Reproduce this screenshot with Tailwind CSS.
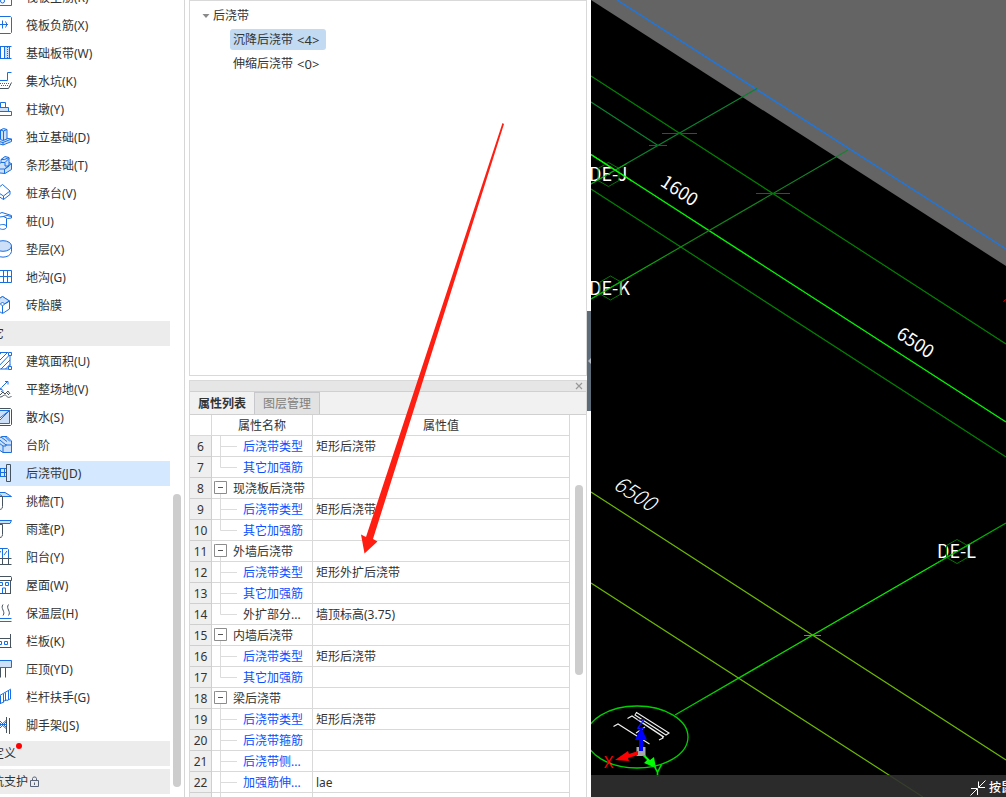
<!DOCTYPE html>
<html lang="zh-CN">
<head>
    <meta charset="UTF-8">
    <meta name="viewport" content="width=device-width, initial-scale=1.0">
    <title>后浇带</title>
    <script src="https://cdn.jsdelivr.net/npm/@tailwindcss/browser@4"></script>
</head>
<body class="h-screen flex overflow-hidden bg-white text-[12px] leading-4 text-[#333] font-['Noto_Sans','Noto_Sans_CJK_SC',sans-serif]">

<!-- Component list -->
<nav class="flex shrink-0 h-full overflow-hidden border-r border-[#d6d6d6]">
    <div class="w-[170px] h-full flex flex-col justify-end overflow-hidden pb-[3px]">
        <ul id="components" class="w-[198px] -ml-7 flex flex-col gap-[3px]"></ul>
    </div>
    <div class="w-[14px] flex flex-col items-center justify-end pb-[10px]">
        <div class="w-2 h-[293px] rounded-full bg-[#cdcdcd]"></div>
    </div>
</nav>

<!-- Tree and property list -->
<main class="w-[398px] ml-1 shrink-0 h-full flex flex-col gap-1">
    <section class="h-[376px] shrink-0 border border-[#d9d9d9] pt-1 pl-3">
        <div class="h-[22px] flex items-center gap-[3px]">
            <svg class="w-2 h-2" viewBox="0 0 8 8"><path d="M.5 2h7L4 6z" fill="#8a8a8a"/></svg>
            <span>后浇带</span>
        </div>
        <ul class="pl-7 pt-0.5 flex flex-col items-start gap-[3px]">
            <li><button class="h-[21px] px-[3px] w-24 flex items-center gap-1 whitespace-nowrap rounded-[3px] bg-[#c2daf2]">沉降后浇带 <span class="text-[13px]">&lt;4&gt;</span></button></li>
            <li><button class="h-[21px] px-[3px] w-24 flex items-center gap-1 whitespace-nowrap rounded-[3px]">伸缩后浇带 <span class="text-[13px]">&lt;0&gt;</span></button></li>
        </ul>
    </section>

    <section class="flex-1 min-h-0 flex flex-col border border-b-0 border-[#d9d9d9]">
        <div class="h-[11px] shrink-0 flex items-center justify-end bg-[#e6e6e6] border-b border-[#d0d0d0] pr-[3px]">
            <button aria-label="关闭" class="block">
                <svg class="w-2 h-2" viewBox="0 0 8 8"><path d="M1 1l6 6M7 1L1 7" stroke="#999" stroke-width="1.2"/></svg>
            </button>
        </div>
        <div class="h-[23px] shrink-0 flex bg-[#f1f1f1] border-b border-[#d0d0d0]">
            <button class="w-[65px] pt-0.5 font-bold border-r border-[#c6c8cc]">属性列表</button>
            <button class="w-[65px] text-[#808080] bg-[#e2e2e2] border-r border-t border-[#c6c8cc]">图层管理</button>
        </div>
        <div class="flex-1 min-h-0 flex overflow-hidden">
            <div class="flex-1 overflow-hidden">
                <table class="w-full table-fixed border-separate border-spacing-0">
                    <thead>
                    <tr class="h-[21px]">
                        <th class="w-[22px] p-0 border-r border-b border-[#d9d9d9]"></th>
                        <th class="w-[101px] p-0 pt-0.5 font-normal border-r border-b border-[#d9d9d9]">属性名称</th>
                        <th class="p-0 pt-0.5 font-normal border-r border-b border-[#d9d9d9]">属性值</th>
                    </tr>
                    </thead>
                    <tbody id="props"></tbody>
                </table>
            </div>
            <div class="w-4 flex justify-end pr-[3px] pt-[70px]">
                <div class="w-2 h-[190px] rounded-full bg-[#cdcdcd]"></div>
            </div>
        </div>
    </section>
</main>

<div class="w-1 shrink-0 pt-[311px]">
    <button aria-label="收起" class="w-1 h-[100px] flex items-center bg-[#5d6b78]">
        <svg class="w-1 h-2" viewBox="0 0 4 8"><path d="M4 1v6L1 4z" fill="#b5bcc4"/></svg>
    </button>
</div>

<!-- Drawing viewport -->
<section class="flex-1 min-w-0 h-full relative bg-black overflow-hidden">
    <svg class="w-full h-full" viewBox="591 0 415 797" preserveAspectRatio="xMinYMin slice" fill="none">
        <defs>
            <linearGradient id="axisK" gradientUnits="userSpaceOnUse" x1="591" y1="299" x2="848" y2="150">
                <stop offset="0" stop-color="#00d400"/><stop offset=".4" stop-color="#148214"/><stop offset="1" stop-color="#148230"/>
            </linearGradient>
            <linearGradient id="axisL" gradientUnits="userSpaceOnUse" x1="675" y1="715" x2="1006" y2="523">
                <stop offset="0" stop-color="#00c800"/><stop offset=".4" stop-color="#14dc00"/><stop offset=".75" stop-color="#00f000"/><stop offset="1" stop-color="#009c00"/>
            </linearGradient>
        </defs>
        <path d="M591 0H1006V266z" fill="#646464"/>
        <path d="M617 0L1006 249" stroke="#1a78e6" stroke-width="1.4"/>

        <!-- grid axes -->
        <path d="M591 76L1006 344M591 189L1006 457" stroke="#008200" stroke-width="1.2"/>
        <path d="M591 102L658 145.500M591 184L757 88.500" stroke="#0a8230" stroke-width="1.2"/>
        <path d="M591 154.500L1006 422" stroke="#00f800" stroke-width="1.400"/>
        <path d="M591 299L848 150" stroke="url(#axisK)" stroke-width="1.2"/>
        <path d="M591 492L1006 760M591 583L923 797" stroke="#6cb800" stroke-width="1.2"/>
        <path d="M675 715L1006 523" stroke="url(#axisL)" stroke-width="1.3"/>
        <path d="M662 133.500h35M649 145.500h18M756 193.500h34" stroke="#087008"/>
        <path d="M804 635.500h17" stroke="#5aaa00"/>

        <!-- axis labels -->
        <g fill="#fff" font-family="Noto Sans CJK SC, sans-serif" font-size="18">
            <text x="589" y="181">DE-J</text>
            <text x="589" y="295">DE-K</text>
            <text x="937" y="558">DE-L</text>
            <g text-anchor="middle">
                <text transform="translate(676 196) rotate(33)">1600</text>
                <text transform="translate(912 348) rotate(33)">6500</text>
                <text transform="translate(631 500) rotate(33)" font-style="italic" font-weight="300" font-size="21">6500</text>
            </g>
        </g>
        <g stroke="#007800">
            <path d="M608.500 162.500l10.500 6v12l-10.500 6-10.500-6v-12z"/>
            <path d="M610.500 276l10.500 6v12l-10.500 6-10.500-6v-12z"/>
            <path d="M957 539.500l10.500 6v12l-10.500 6-10.500-6v-12z"/>
        </g>
        <path d="M591 184L627 163.500M591 299L630 276.500M937 563L976 540.500" stroke="#00b400"/>
        <path d="M591 154.500L632 181" stroke="#00f800" stroke-width="1.2"/>
        <path d="M1003.500 301.500l2.500-2" stroke="#e00000"/>

        <!-- orientation gizmo -->
        <ellipse cx="637" cy="737" rx="51" ry="31" stroke="#00d000" stroke-width="1.3"/>
        <path d="M636.500 712.500L669 733L666 735L635 715zM627.500 718.500L632 716L662 736L663 738L659 740M613.500 726.500L618 724L649.500 744M636 733L645 727M640 721L664 737" stroke="#f0f0f0" stroke-width="1.100"/>
        <text x="637" y="729" fill="#1414ff" font-size="14" font-family="Noto Sans, sans-serif">Z</text>
        <path d="M636.500 747h9v9h-9z" fill="#a8a8a8"/>
        <path d="M639 751v-11h-4l6-13 6 13h-4v11z" fill="#0000ff"/>
        <path d="M638 751l-9 3-1-3-13 9 14 1-1-3 10-3z" fill="#ff0000"/>
        <path d="M642 755l5 5-3 3 12 5-2-11-4 3-5-5z" fill="#00ff00"/>
        <text x="604" y="768" fill="#ff0000" font-size="16" font-family="Noto Sans, sans-serif">X</text>
        <text x="653" y="777" fill="#00e600" font-size="16" font-family="Noto Sans, sans-serif">Y</text>
    </svg>

    <footer class="absolute inset-x-0 bottom-0 h-[22px] flex bg-[#303030]/90 text-white">
        <div class="ml-auto w-9 flex items-center gap-[3px] pt-1 overflow-hidden whitespace-nowrap">
            <svg class="w-4 h-4 shrink-0" viewBox="0 0 16 16" fill="none" stroke="#fff"><path d="M15.500 .5L8.500 7.500M8.500 1.500v6H15M.5 15.500L7 9M1 8.500h6.500V15"/></svg>
            <span class="font-medium">按鼠标左键指定第一个角点</span>
        </div>
    </footer>
</section>

<!-- Pointer arrow -->
<svg class="absolute left-[355px] top-[120px] w-[152px] h-[436px] pointer-events-none" viewBox="355 120 152 436">
    <path d="M502.500 123L504 124L373 539L377.500 541.500L364.500 553.500L361 534.500L366 537z" fill="#ff1e12"/>
</svg>

<script>
    // b: blue stroke, f: light blue fill with blue stroke, d: dark stroke, t: dotted blue
    const styles = {
        b: 'fill="none" stroke="#1a6fe0"',
        f: 'fill="#cde0f8" stroke="#1a6fe0"',
        d: 'fill="none" stroke="#47525f"',
        t: 'fill="none" stroke="#1a6fe0" stroke-dasharray="1 1"'
    };

    const components = [
        ['筏板主筋(R)', [['b', 'M.5.5h17v17H.5zM6.500 13a2 2 0 1 0 4 0a2 2 0 1 0-4 0M8.500 3v8']]],
        ['筏板负筋(X)', [['b', 'M1.500.5h15l1 1v15l-1 1h-15l-1-1v-15zM3 8.500h11M8.500 4.500v8M11.500 5.500l1.500 3-1.500 3']]],
        ['基础板带(W)', [['f', 'M10.500 2.500h5v12h-5z'], ['b', 'M0 2.500h17.500M0 14.500h17.500M2.500 2.500v12M6.500 2.500v12'], ['t', 'M13.500 3v11']]],
        ['集水坑(K)', [['b', 'M17.500.5h-4v8H0'], ['t', 'M0 11.500h15M1 13.500h13'], ['d', 'M17.500 10.500l-3 6H0']]],
        ['柱墩(Y)', [['b', 'M6.500 2.500h5v5h-5z'], ['f', 'M3.500 7.500h11v4h-11z'], ['b', 'M.5 11.500h17v4H.5z']]],
        ['独立基础(D)', [['f', 'M1 12.500l7-3 9.500 1.500v2.500L9 17l-8-2.500z'], ['b', 'M1 12.500l8 2 8.500-3.500M9 14.500V17'], ['f', 'M6.500 2l3-1.500 3.500 1V11l-4 1.500-2.500-1zM9.500 3v9M9.500 3l3.500-1.500M6.500 2l3 1']]],
        ['条形基础(T)', [['f', 'M1 11.500l6-5V3.500l4-3 4 1v5l2.500 1v6L11 17.500l-10-1z'], ['b', 'M1 13h9.500v4.500M10.500 13l7-5.500M7 6.500h4V10h4M11 6.500l4-4M7 3.500h3.500L15 1.500M15 6.500V10l-4 3']]],
        ['桩承台(V)', [['b', 'M8.500.5L1 6.500l8.500 5.500L16 7zM1 6.500V10l8.500 5.500 6.500-5V7M9.500 12v3.500']]],
        ['桩(U)', [['b', 'M1 3.500l7-3 9.500 3v2.500l-4 .5-4-2-8 1zM9 4.500l4-1 4.500 1M5 6v9.500c1 2.500 6.500 2.500 7.500 0V6.500M5 14c1-2 6.500-2 7.500 0']]],
        ['垫层(X)', [['b', 'M.5 6v5.500c1 7.500 16 7.500 17 0V6'], ['f', 'M.5 6a8.500 5.300 0 1 0 17 0a8.500 5.300 0 1 0-17 0']]],
        ['地沟(G)', [['b', 'M.5 2.500h17v12H.5zM.5 8.500h17M5.500 2.500v12M9.500 2.500v12M13.500 2.500v12']]],
        ['砖胎膜', [['b', 'M8.500.5l7 4.500v8l-7 4.500-7-4.500V5z'], ['f', 'M8.500.5l7 4.500-5 3-2-2-2 2-5-3z'], ['b', 'M6.500 8l2 2 2-2M8.500 10v7M10.500 8l5-3']]],
        { head: '其它' },
        ['建筑面积(U)', [['b', 'M2 .5h12M2 17h12M16 4v10.500M.5 8l7-7.500M.5 13.500L13 1M2 17L15 3.500M7 17l9-9M11.500 17l4.500-4.500'], ['b', 'M14.500.5h3v3h-3zM14.500 14.500h3v3h-3z']]],
        ['平整场地(V)', [['b', 'M1 3.500L9.500 11M3 10l5-1M7.500 7.500L13 2M11 1.500h3v3'], ['d', 'M1 12l5 3 3-3 2 2 3-3 2 3M1 16.500c3-3 4 2 7 0s3-2 5 0 3 0 4.500 0M7 11l3 2M13 13l2 2']]],
        ['散水(S)', [['f', 'M2.500 15.500v-3L15.500 2.500h-13zM2.500 15.500L15.500 2.500v13z'], ['d', 'M.5.5h16l1 1v15l-1 1H.5z']]],
        ['台阶', [['f', 'M1 4l7-3.500h5l4.500 4.500V16.500H9L1 11z'], ['b', 'M1 4l8 6v6.500M4 2.500l8 6.500h5M7 1l6 4.500M11 .5l5 5M9 10h3V8']]],
        ['后浇带(JD)', [['b', 'M0 4.500h12M0 8.500h12M0 12.500h12M6.500 4v9M10.500 4v9'], ['d', 'M12.500.5h4v17h-4z']]],
        ['挑檐(T)', [['f', 'M0 .5h11l6.500 4H8L7 3H0z'], ['d', 'M0 4.500h8.500v10c0 3-2 3-4 3M5.500 10v7']]],
        ['雨蓬(P)', [['f', 'M0 .5h17.500l-1.500 3H0z'], ['d', 'M0 4.500h8.500v10c0 3-2 3-4 3M5.500 10v7']]],
        ['阳台(Y)', [['b', 'M2.500 10V.5h11l1 1V10M8.500 1v9M10 7l3-4M4 7l3-4'], ['d', 'M0 10.500h17.500M0 16.500h17.500M2.500 11v5M8.500 11v5M14.500 11v5']]],
        ['屋面(W)', [['d', 'M1 .5h16l.5 1v3H.5v-3zM2.500 5v12.500M16.500 5v12.500M0 17.500h17'], ['b', 'M8.500 17v-5h3v5M5.500 9.500v-3h3v3zM11.500 9.500v-3h3v3z']]],
        ['保温层(H)', [['d', 'M4 .5c-3 4 3 7 0 11M9 .5c-3 4 3 7 0 11M14.500.5c-3 4 3 7 0 11'], ['b', 'M0 14.500h17.500M0 17.500h17.500']]],
        ['栏板(K)', [['d', 'M0 6.500h16.500M16.500 2v14M0 15.500h17.500'], ['b', 'M4.500 9.500h3v3h-3zM10.500 9.500h3v3h-3z']]],
        ['压顶(YD)', [['f', 'M.5.5h17v7H.5z'], ['d', 'M6.500 8v9.500M11.500 8v9.500']]],
        ['栏杆扶手(G)', [['b', 'M4 8.500L17 1M6.500 7.500v8M9.500 6v8M11.500 4.500v8M14.500 3v9M16.500 2v9M5 16l5-2M10 13l3-1M13 12.500l4-2']]],
        ['脚手架(JS)', [['d', 'M12.500 1v16M15.500 2v16M2.500 1v16'], ['b', 'M3 4.500l9 8M3 12.500l9-8M2 8.500h11M6 5l6 6M6 12l6-6']]],
        { head: '自定义', dot: true },
        { head: '基坑支护', lock: true }
    ];

    const dot = '<span class="w-1.5 h-1.5 mt-0.5 self-start rounded-full bg-[#ff0000]"></span>';
    const lock = '<svg class="w-[11px] h-3 ml-px" viewBox="0 0 11 12" fill="none" stroke="#5a6478"><path d="M1.500 4.500h8v6h-8zM3.500 4.500v-2l1-1.500h2l1 1.500v2M5.500 6.500v2.500"/></svg>';

    document.getElementById('components').innerHTML = components.map(c => {
        if (c.head) {
            return `<li class="h-[25px] pl-2 flex items-center bg-[#ececec]">${c.head}${c.dot ? dot : ''}${c.lock ? lock : ''}</li>`;
        }
        const paths = c[1].map(([s, d]) => `<path d="${d}" ${styles[s]}/>`).join('');
        const bg = c[0].startsWith('后浇带') ? 'bg-[#d4e8ff]' : '';
        return `<li><button class="w-full h-[25px] pl-[22px] flex items-center gap-[14px] text-left ${bg}">
            <svg class="w-[18px] h-[19px] shrink-0" viewBox="0 0 18 19">${paths}</svg>${c[0]}</button></li>`;
    }).join('');

    // [no, name, value, kind] - kind: g = group, m = middle child, l = last child, x = last child in plain colour
    const props = [
        [6, '后浇带类型', '矩形后浇带', 'm'],
        [7, '其它加强筋', '', 'l'],
        [8, '现浇板后浇带', '', 'g'],
        [9, '后浇带类型', '矩形后浇带', 'm'],
        [10, '其它加强筋', '', 'l'],
        [11, '外墙后浇带', '', 'g'],
        [12, '后浇带类型', '矩形外扩后浇带', 'm'],
        [13, '其它加强筋', '', 'm'],
        [14, '外扩部分...', '墙顶标高(3.75)', 'x'],
        [15, '内墙后浇带', '', 'g'],
        [16, '后浇带类型', '矩形后浇带', 'm'],
        [17, '其它加强筋', '', 'l'],
        [18, '梁后浇带', '', 'g'],
        [19, '后浇带类型', '矩形后浇带', 'm'],
        [20, '后浇带箍筋', '', 'm'],
        [21, '后浇带侧...', '', 'm'],
        [22, '加强筋伸...', 'lae', 'm'],
        ['', '', '', 'm']
    ];

    const branch = {
        m: '<path d="M8.500 0v20M9 10.500h16" stroke="#dcdcdc"/>',
        l: '<path d="M8.500 0v10.500H25" stroke="#dcdcdc"/>',
        x: '<path d="M8.500 0v10.500H25" stroke="#dcdcdc"/>',
        g: '<path d="M3.500 3.500h11v12h-12v-12z" stroke="#8c8c8c"/><path d="M6 9.500h5" stroke="#555"/><path d="M8.500 16v4" stroke="#dcdcdc"/>'
    };

    document.getElementById('props').innerHTML = props.map(([no, name, value, kind]) => {
        const color = kind === 'm' || kind === 'l' ? 'text-[#0a50ff]' : '';
        const width = kind === 'g' ? 'w-[21px]' : 'w-[31px]';
        const box = kind === 'g' ? '0 0 21 20' : '0 0 31 20';
        return `<tr class="h-[21px]">
            <td class="p-0 pt-0.5 text-center bg-[#efefef] border-r border-b border-[#cfcfcf]">${no}</td>
            <td class="p-0 border-r border-b border-[#d9d9d9]"><div class="h-5 flex items-center whitespace-nowrap overflow-hidden ${color}"><svg class="${width} h-5 shrink-0" viewBox="${box}" fill="none">${branch[kind]}</svg><span class="pt-0.5">${name}</span></div></td>
            <td class="p-0 pt-0.5 pl-[3px] border-r border-b border-[#d9d9d9]">${value}</td>
        </tr>`;
    }).join('');
</script>
</body>
</html>
